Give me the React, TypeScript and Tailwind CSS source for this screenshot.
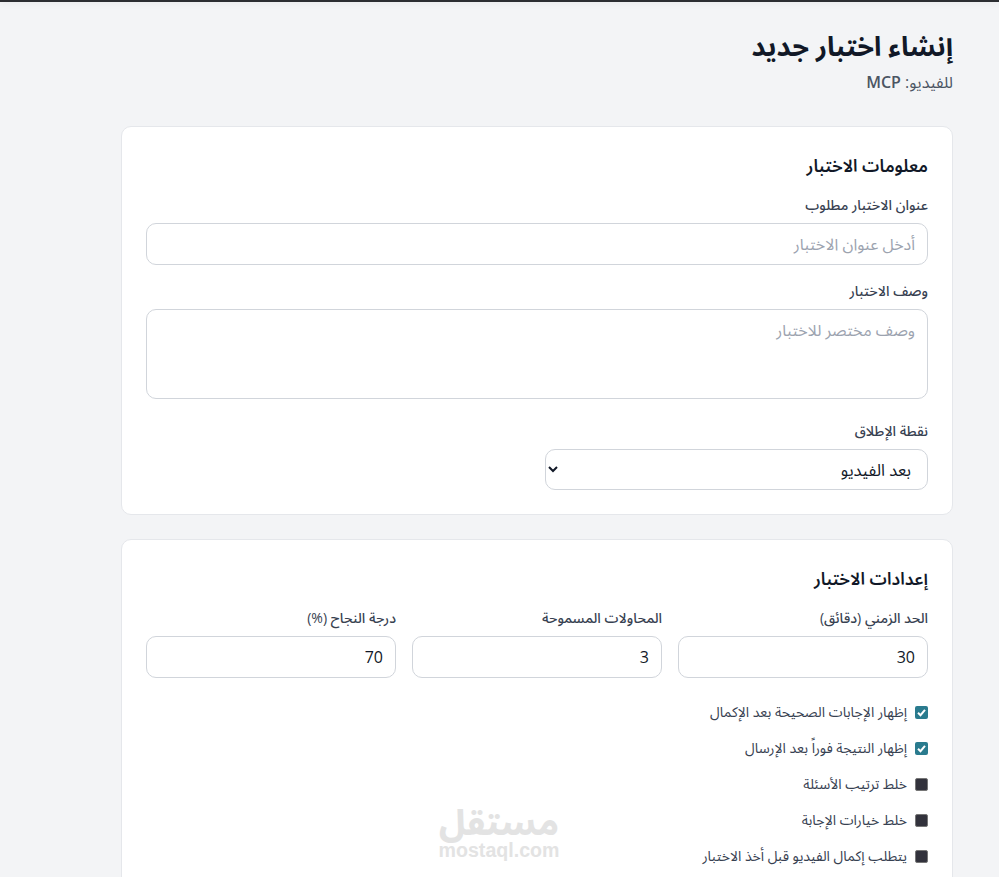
import React from "react";

const font = "font-['Open_Sans','Noto_Sans_Arabic','DejaVu_Sans',sans-serif]";
const inputCls = "block w-full h-[42px] rounded-[10px] border border-[#d1d5db] bg-white px-3 text-[16px] text-[#111827] placeholder:text-[#9ca3af] outline-none";

function Label({ children }: { children: React.ReactNode }) {
  return <label className="block mb-[8px] text-[14px] leading-[20px] font-medium text-[#374151]">{children}</label>;
}

function Check({ label, checked }: { label: string; checked?: boolean }) {
  return (
    <label className="flex items-center gap-2 h-[20px] text-[14px] leading-[20px] text-[#374151]">
      <span className={`flex items-center justify-center w-[13px] h-[13px] rounded-[2px] ${checked ? "bg-[#2a7b8e]" : "bg-[#32323c] border border-[#767676]"}`}>
        {checked && (
          <svg viewBox="0 0 12 12" className="w-[11px] h-[11px]" fill="none" stroke="white" strokeWidth="2.2">
            <path d="M2.2 6.2 L4.9 8.9 L9.8 3.2" />
          </svg>
        )}
      </span>
      <span>{label}</span>
    </label>
  );
}

function Num({ label, value }: { label: string; value: string }) {
  return (
    <div>
      <Label>{label}</Label>
      <input type="text" defaultValue={value} className={inputCls} />
    </div>
  );
}

export default function App() {
  return (
    <div dir="rtl" className={`${font} relative h-[877px] overflow-hidden bg-[#f3f4f6]`}>
      <div className="h-[2px] bg-[#2b2d31] shadow-[0_1px_6px_rgba(0,0,0,0.1)]" />
      <div className="mr-[46px] w-[832px] pt-[26px]">
        <h1 className="text-[27px] leading-[36px] font-bold text-[#111827]">إنشاء اختبار جديد</h1>
        <p className="mt-[6px] text-[16px] leading-[24px] text-[#4b5563]">للفيديو: <span className="font-semibold">MCP</span></p>

        <section className="mt-[32px] rounded-[10px] border border-[#e5e7eb] bg-white px-6 pb-6 pt-[25px]">
          <h2 className="text-[17.3px] leading-[28px] font-semibold text-[#111827] mb-[15px]">معلومات الاختبار</h2>
          <Label>عنوان الاختبار مطلوب</Label>
          <input className={inputCls} placeholder="أدخل عنوان الاختبار" />
          <div className="mt-[16px]">
            <Label>وصف الاختبار</Label>
            <textarea className={`${inputCls} h-[90px] py-2 resize-none`} placeholder="وصف مختصر للاختبار" />
          </div>
          <div className="mt-[22px]">
            <Label>نقطة الإطلاق</Label>
            <select className="block w-[383px] h-[41px] rounded-[10px] border border-[#d1d5db] bg-white px-3 text-[16.5px] text-[#111827]" defaultValue="a">
              <option value="a">بعد الفيديو</option>
            </select>
          </div>
        </section>

        <section className="mt-[24px] rounded-[10px] border border-[#e5e7eb] bg-white px-6 pb-10 pt-[25px]">
          <h2 className="text-[17.3px] leading-[28px] font-semibold text-[#111827] mb-[15px]">إعدادات الاختبار</h2>
          <div className="grid grid-cols-3 gap-4">
            <Num label="الحد الزمني (دقائق)" value="30" />
            <Num label="المحاولات المسموحة" value="3" />
            <Num label="درجة النجاح (%)" value="70" />
          </div>
          <div className="mt-[24px] flex flex-col gap-4">
            <Check label="إظهار الإجابات الصحيحة بعد الإكمال" checked />
            <Check label="إظهار النتيجة فوراً بعد الإرسال" checked />
            <Check label="خلط ترتيب الأسئلة" />
            <Check label="خلط خيارات الإجابة" />
            <Check label="يتطلب إكمال الفيديو قبل أخذ الاختبار" />
          </div>
        </section>
      </div>
      <div className="absolute left-[438px] top-[803px] w-[122px] text-center text-[#e3e3e3] pointer-events-none">
        <div className="text-[35px] leading-[37px] font-extrabold">مستقل</div>
        <div dir="ltr" className="font-['Liberation_Sans',sans-serif] text-[19.6px] leading-[20px] font-bold whitespace-nowrap">mostaql.com</div>
      </div>
    </div>
  );
}
